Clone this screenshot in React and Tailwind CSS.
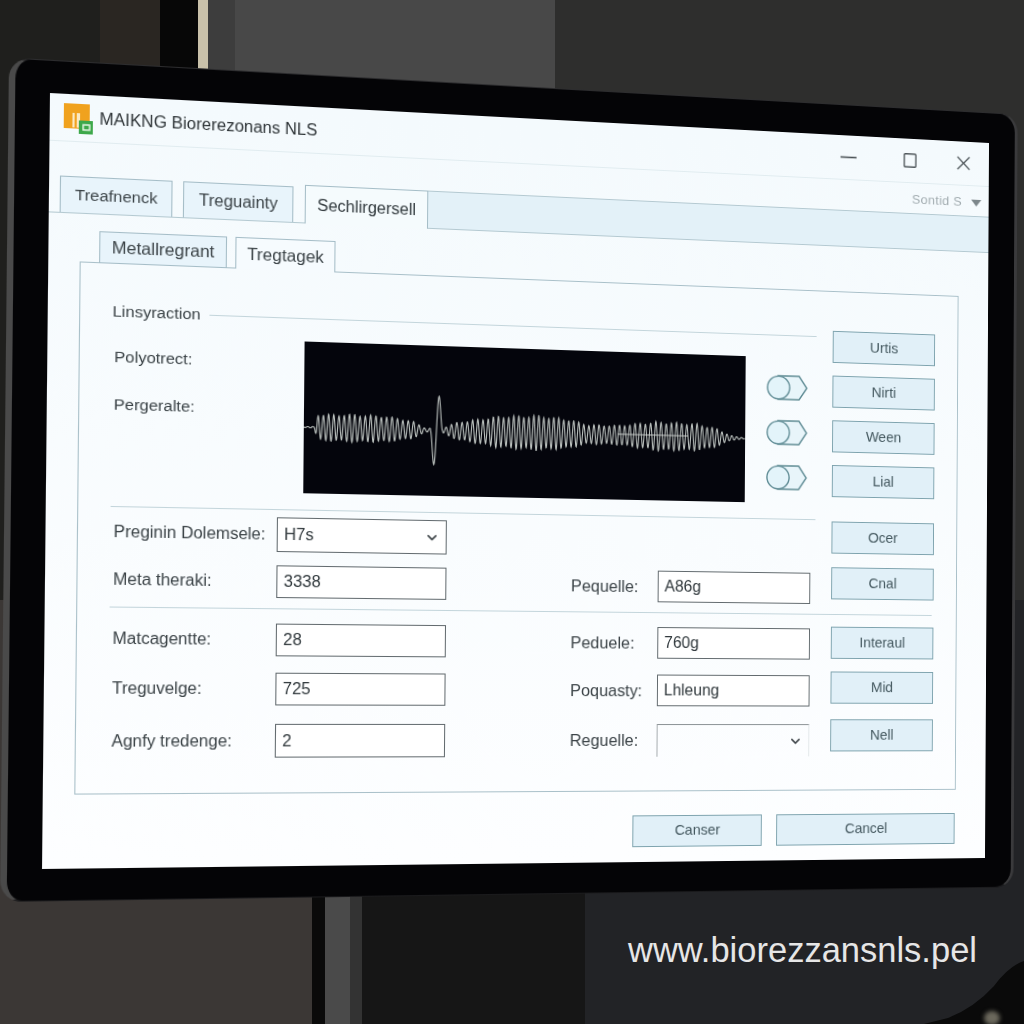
import React from 'react';
import { ChevronDown } from 'lucide-react';

// waveform: sine carrier with a piecewise envelope
const ENVELOPE = [
  [0, 0.4], [10, 0.6], [13, 13], [50, 14], [80, 13], [105, 9], [115, 4], [118, 2], [135, 2], [140, 5],
  [150, 9], [190, 16], [230, 18], [260, 15], [280, 10], [310, 10], [350, 15], [390, 14], [410, 10], [425, 3], [432, 1.5], [441, 0.5],
];

const envelopeAt = (x) => {
  for (let i = 1; i < ENVELOPE.length; i++) {
    const [x0, a0] = ENVELOPE[i - 1];
    const [x1, a1] = ENVELOPE[i];
    if (x <= x1) return a0 + ((a1 - a0) * (x - x0)) / (x1 - x0);
  }
  return 0.5;
};

const buildWave = () => {
  const points = [];
  for (let x = 0; x <= 441; x += 0.3) {
    const amp = envelopeAt(x) * (0.93 + 0.07 * Math.sin(x * 0.31));
    let y = 84 + amp * Math.sin(x * 1.22 + Math.sin(x / 37) * 1.4);
    if (x > 123 && x < 135) {
      // the single spike
      const t = (x - 123) / 12;
      y = 84 + Math.sin(t * Math.PI * 2) * 44 * Math.sin(t * Math.PI);
    }
    points.push(`${x.toFixed(1)} ${y.toFixed(1)}`);
  }
  return 'M' + points.join('L');
};

const WAVE = buildWave();

const Btn = ({ children, className = 'w-[109px] h-[33px]' }) => (
  <div className={`${className} flex items-center justify-center bg-[#e1f0f8] border border-[#7ea3ae] text-[14.5px] text-[#44585f]`}>
    {children}
  </div>
);

const Field = ({ value, select, open, className = 'w-[165px]' }) => (
  <div
    className={`${className} h-full flex items-center justify-between px-[6px] text-[16px] text-[#30383c] ${
      open ? 'border-t border-l border-r border-t-[#8a9194] border-l-[#a5abae] border-r-[#e3e8ea]' : 'bg-white border border-[#626a6e]'
    }`}
  >
    <span>{value}</span>
    {select && <ChevronDown size={15} strokeWidth={2.5} className="text-[#3a4145]" />}
  </div>
);

const Row = ({ label, height, field, midLabel, mid }) => (
  <div className={`flex items-center ${height}`}>
    <div className="w-[157px] pl-[3px] text-[16px] text-[#3b4347]">{label}</div>
    {field}
    {midLabel && (
      <>
        <div className="ml-[124px] w-[88px] text-[16.4px] text-[#3b4347]">{midLabel}</div>
        {mid}
      </>
    )}
  </div>
);

const Toggle = () => (
  <svg width="43" height="26" viewBox="0 0 43 26">
    <path d="M12 1H34L42 13L34 25H12Z" fill="#e8f5fa" stroke="#5d8a93" strokeWidth="1.4" />
    <circle cx="12.5" cy="13" r="11.6" fill="#e3f4fa" stroke="#5d8a93" strokeWidth="1.4" />
  </svg>
);

const AppIcon = () => (
  <svg width="27" height="29" viewBox="0 0 27 29" className="ml-[13px] mt-[2px] shrink-0">
    <rect x="0" y="0" width="24" height="24" fill="#f0a21e" />
    <rect x="8" y="9" width="2" height="14" fill="#fbe9c2" />
    <rect x="12" y="9" width="3" height="14" fill="#fbe9c2" />
    <rect x="14" y="16" width="13" height="13" fill="#3da84a" />
    <rect x="18" y="20" width="6" height="5" fill="none" stroke="#e8f7e8" strokeWidth="1.4" />
  </svg>
);

const App = () => (
  <div className="relative w-[1024px] h-[1024px] overflow-hidden bg-[#2a2a2a] font-['Liberation_Sans',sans-serif]">
    {/* room behind the monitor */}
    <div className="flex h-[600px]">
      <div className="w-[100px] bg-[#1f1f1d]" />
      <div className="w-[60px] bg-[#2a2622]" />
      <div className="w-[38px] bg-[#070707]" />
      <div className="w-[10px] bg-[#c9c1aa]" />
      <div className="w-[27px] bg-[#3d3d3d]" />
      <div className="w-[320px] bg-[#484848]" />
      <div className="flex-1 bg-[#2e2e2d]" />
    </div>
    <div className="flex h-[424px]">
      <div className="w-[312px] bg-[#3b3735]" />
      <div className="w-[13px] bg-[#0a0a0a]" />
      <div className="w-[25px] bg-[#4a4a4a]" />
      <div className="w-[12px] bg-[#333333]" />
      <div className="w-[223px] bg-[#161616]" />
      <div className="flex-1 bg-[#222326]" />
    </div>

    {/* monitor, flat layout pushed through the photo's perspective */}
    <div className="absolute left-0 top-0 w-[1009px] h-[808px] pl-[38px] pt-[32px] bg-[#040406] rounded-[20px] border-l-[6px] border-t border-r-[3px] border-b border-l-[#4a4a4a] border-t-[#2c2c2e] border-r-[#3a3a3c] border-b-[#1a1a1c] box-border blur-[0.35px] origin-top-left [transform:matrix3d(1.088635,0.066161,0,0.0000906968,-0.010957,1.037084,0,-0.00000520819,0,0,1,0,50,93,0,1)_translate(-38px,-32px)]">
      <div className="-ml-[6px] -mt-px w-[940px] h-[745px] bg-linear-to-b from-[#f4fafd] to-[#fdfeff] overflow-hidden">
        {/* title bar */}
        <div className="flex items-center h-[46px] border-b border-[#e1ecf0]">
          <AppIcon />
          <span className="ml-[6px] text-[16px] text-[#2e3437]">MAIKNG Biorerezonans NLS</span>
          <div className="ml-auto flex items-center pr-[20px] text-[#4a5256]">
            <svg width="17" height="3" viewBox="0 0 17 3"><path d="M0 1.5H17" stroke="currentColor" strokeWidth="1.6" /></svg>
            <svg width="14" height="15" viewBox="0 0 14 15" className="ml-[50px]"><rect x="0.8" y="0.8" width="12.4" height="13.4" rx="1" fill="none" stroke="currentColor" strokeWidth="1.4" /></svg>
            <svg width="15" height="15" viewBox="0 0 15 15" className="ml-[43px]"><path d="M1 1L14 14M14 1L1 14" stroke="currentColor" strokeWidth="1.4" /></svg>
          </div>
        </div>
        <div className="flex items-center justify-end h-[31px] pt-[4px] pr-[8px] text-[13.5px] text-[#a3adb1]">
          <span className="tracking-wide">Sontid S</span>
          <svg width="11" height="7" viewBox="0 0 11 7" className="ml-[10px]"><path d="M0 0H11L5.5 7Z" fill="#7d878b" /></svg>
        </div>

        {/* main tabs */}
        <div className="flex items-end h-[38px] border-b border-[#b4c9d1]">
          <div className="ml-[10px] w-[105px] h-[35px] flex items-center justify-center bg-[#e8f4fb] border border-b-0 border-[#a5bdc7] text-[15.5px] text-[#3b4347]">Treafnenck</div>
          <div className="ml-[10px] w-[105px] h-[35px] flex items-center justify-center bg-[#e8f4fb] border border-b-0 border-[#a5bdc7] text-[16px] text-[#3b4347]">Treguainty</div>
          <div className="ml-[11px] -mb-px w-[120px] h-[38px] flex items-center justify-center bg-[#f5fbfd] border border-b-0 border-[#a5bdc7] text-[16px] text-[#30383c]">Sechlirgersell</div>
          <div className="flex-1 h-full bg-[#e3f1f8] border-t border-[#b4c9d1]" />
        </div>

        {/* sub tabs */}
        <div className="relative z-10 ml-[47px] mt-[16px] -mb-px flex items-end gap-[8px]">
          <div className="w-[120px] h-[31px] flex items-center justify-center bg-[#e8f4fb] border border-[#a5bdc7] text-[16.5px] text-[#3b4347]">Metallregrant</div>
          <div className="w-[96px] h-[31px] flex items-center justify-center bg-[#f6fbfe] border border-b-0 border-[#a5bdc7] text-[16.5px] text-[#3b4347]">Tregtagek</div>
        </div>

        {/* panel */}
        <div className="relative ml-[29px] w-[879px] h-[513px] pl-[30px] pt-[40px] border border-[#a9c0c9]">
          <div className="flex gap-[17px]">
            <div className="w-[697px]">
              <div className="flex items-center h-[12px] text-[15.5px] text-[#3b4347]">
                <span>Linsyraction</span>
                <div className="flex-1 ml-[8px] border-t border-[#c3d5db]" />
              </div>
              <div className="flex mt-[17px]">
                <div className="w-[182px] pt-[11px] pl-[2px] text-[15.5px] text-[#3b4347]">
                  <div className="h-[20px] leading-[20px]">Polyotrect:</div>
                  <div className="h-[20px] leading-[20px] mt-[26px]">Pergeralte:</div>
                </div>
                <svg width="441" height="149" viewBox="0 0 441 149" className="bg-[#04050c] shrink-0">
                  <path d={WAVE} fill="none" stroke="#bcc2bf" strokeWidth="1.1" />
                  <path d="M310 83H382" stroke="#d5d9d6" strokeWidth="0.9" />
                </svg>
                <div className="ml-[22px] flex flex-col gap-[20px] pt-[18px]">
                  <Toggle />
                  <Toggle />
                  <Toggle />
                </div>
              </div>
              <div className="mt-[16px] border-t border-[#c3d5db]" />
              <Row label="Preginin Dolemsele:" height="h-[34px] mt-[7px]" field={<Field value="H7s" select />} />
              <Row
                label="Meta theraki:"
                height="h-[32px] mt-[13px]"
                field={<Field value="3338" />}
                midLabel="Pequelle:"
                mid={<Field value="A86g" className="w-[158px]" />}
              />
            </div>
            <div className="w-[109px]">
              <div className="flex flex-col gap-[13px]">
                <Btn>Urtis</Btn>
                <Btn>Nirti</Btn>
                <Btn>Ween</Btn>
                <Btn>Lial</Btn>
              </div>
              <div className="flex flex-col gap-[14px] mt-[25px]">
                <Btn>Ocer</Btn>
                <Btn>Cnal</Btn>
              </div>
            </div>
          </div>

          <div className="mt-[10px] w-[821px] border-t border-[#c3d5db]" />

          <div className="flex gap-[17px]">
            <div className="w-[697px] pt-[14px]">
              <Row label="Matcagentte:" height="h-[32px]" field={<Field value="28" />} midLabel="Peduele:" mid={<Field value="760g" className="w-[158px]" />} />
              <Row label="Treguvelge:" height="h-[32px] mt-[16px]" field={<Field value="725" />} midLabel="Poquasty:" mid={<Field value="Lhleung" className="w-[158px]" />} />
              <Row label="Agnfy tredenge:" height="h-[33px] mt-[18px]" field={<Field value="2" />} midLabel="Reguelle:" mid={<Field value="" select open className="w-[158px]" />} />
            </div>
            <div className="w-[109px] pt-[12px]">
              <Btn>Interaul</Btn>
              <div className="mt-[13px]"><Btn>Mid</Btn></div>
              <div className="mt-[16px]"><Btn>Nell</Btn></div>
            </div>
          </div>
        </div>

        {/* footer */}
        <div className="flex justify-end gap-[15px] mt-[24px] pr-[33px]">
          <Btn className="w-[133px] h-[32px]">Canser</Btn>
          <Btn className="w-[189px] h-[32px]">Cancel</Btn>
        </div>
      </div>
    </div>

    {/* watermark and the object in the corner */}
    <div className="absolute left-[628px] top-[930px] text-[34.5px] leading-[40px] text-[#e6e6e6]">www.biorezzansnls.pel</div>
    <svg width="100" height="66" viewBox="0 0 100 66" className="absolute right-0 bottom-0">
      <path d="M0 66L24 60Q50 50 70 28Q85 8 100 3V66Z" fill="#0a0a0a" />
      <ellipse cx="68" cy="60" rx="8" ry="7" fill="#6b685c" className="blur-[2px]" />
    </svg>
  </div>
);

export default App;
